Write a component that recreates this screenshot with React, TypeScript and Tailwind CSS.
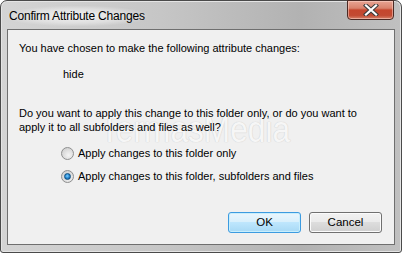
import React from "react";

const Radio: React.FC<{ checked?: boolean }> = ({ checked }) => (
    <span className="relative flex h-[13px] w-[13px] shrink-0 items-center justify-center rounded-full border border-[#8e8f8f] bg-[radial-gradient(circle_at_60%_65%,#f4f4f4_0%,#dcdcdc_55%,#c8c8c8_100%)]">
        {checked && (
            <span className="h-[7px] w-[7px] rounded-full border border-[#0d4f82] bg-[radial-gradient(circle_at_45%_40%,#7fd0ff_0%,#2e8fd6_45%,#0b4a86_100%)]" />
        )}
    </span>
);

const Button: React.FC<{ label: string; focused?: boolean }> = ({ label, focused }) => (
    <div
        className={
            focused
                ? "flex h-[21px] w-[73px] items-center justify-center rounded-[3px] border border-[#3c9be0] bg-[linear-gradient(#eaf6fd_0%,#d9f0fc_45%,#bee6fd_50%,#a7d9f5_100%)] shadow-[inset_0_0_0_1px_#c8eefc]"
                : "flex h-[21px] w-[73px] items-center justify-center rounded-[3px] border border-[#707070] bg-[linear-gradient(#f2f2f2_0%,#ebebeb_45%,#dddddd_50%,#cfcfcf_100%)] shadow-[inset_0_0_0_1px_#fbfbfb]"
        }
    >
        <span className="text-[11.5px] leading-none text-black">{label}</span>
    </div>
);

const App: React.FC = () => {
    return (
        <div className="h-[253px] w-[402px] bg-white font-['Liberation_Sans',Arial,sans-serif]">
            <div className="flex h-[253px] w-[402px] flex-col rounded-t-[7px] rounded-b-[3px] border border-[#4a4a4a] bg-[linear-gradient(90deg,#d4d4d4_0%,#c6c6c6_40%,#b2b2b2_75%,#c0c0c0_100%)] shadow-[inset_0_0_0_1px_#e4e4e4]">

                {/* title bar */}
                <div className="relative flex h-[28px] items-start">
                    <div className="mt-[5px] ml-[6px] rounded-full bg-[radial-gradient(ellipse_at_center,rgba(255,255,255,0.75)_0%,rgba(255,255,255,0.35)_50%,rgba(255,255,255,0)_75%)] px-[2px] py-[1px] text-[12px] tracking-[-0.2px] text-black">
                        Confirm Attribute Changes
                    </div>
                    <div className="absolute right-[7px] top-[-1px] flex h-[20px] w-[47px] items-center justify-center rounded-b-[4px] border border-[#4b2a24] bg-[linear-gradient(#e8a493_0%,#d9826c_40%,#c5462d_50%,#c24a32_80%,#d6836a_100%)] shadow-[inset_0_0_0_1px_rgba(255,220,210,0.5)]">
                        <svg width="16" height="12" viewBox="0 0 16 12">
                            <path d="M3 1.5 L13 10.5 M13 1.5 L3 10.5" stroke="#3b3b3b" strokeWidth="4.2" strokeLinecap="square" />
                            <path d="M3 1.5 L13 10.5 M13 1.5 L3 10.5" stroke="#ffffff" strokeWidth="2.2" strokeLinecap="square" />
                        </svg>
                    </div>
                </div>

                {/* client area */}
                <div className="relative mx-[6px] h-[216px] border border-[#6f6f6f] bg-[#f0f0f0] pl-[11px] pt-[10px] text-[11px] leading-[14px] text-black">
                    {/* watermark */}
                    <div className="pointer-events-none absolute left-[92px] top-[82px] origin-left scale-x-[0.88] text-[36px] leading-[36px] text-[#f6f6f6] [text-shadow:0_0_1px_#d2d2d2,0_0_1px_#d2d2d2]">
                        TermasMedia
                    </div>

                    <div className="relative">
                        <p className="py-[1px]">You have chosen to make the following attribute changes:</p>
                        <p className="mt-[10px] pl-[44px] py-[1px]">hide</p>

                        <p className="mt-[24px]">Do you want to apply this change to this folder only, or do you want to</p>
                        <p>apply it to all subfolders and files as well?</p>

                        <div className="mt-[12px] flex flex-col gap-[9px] pl-[42px]">
                            <label className="flex h-[14px] items-center gap-[4px]">
                                <Radio />
                                <span>Apply changes to this folder only</span>
                            </label>
                            <label className="flex h-[14px] items-center gap-[4px]">
                                <Radio checked />
                                <span>Apply changes to this folder, subfolders and files</span>
                            </label>
                        </div>

                        <div className="mt-[29px] flex justify-end gap-[8px] pr-[12px]">
                            <Button label="OK" focused />
                            <Button label="Cancel" />
                        </div>
                    </div>
                </div>

                <div className="flex-1" />
            </div>
        </div>
    );
};

export default App;
